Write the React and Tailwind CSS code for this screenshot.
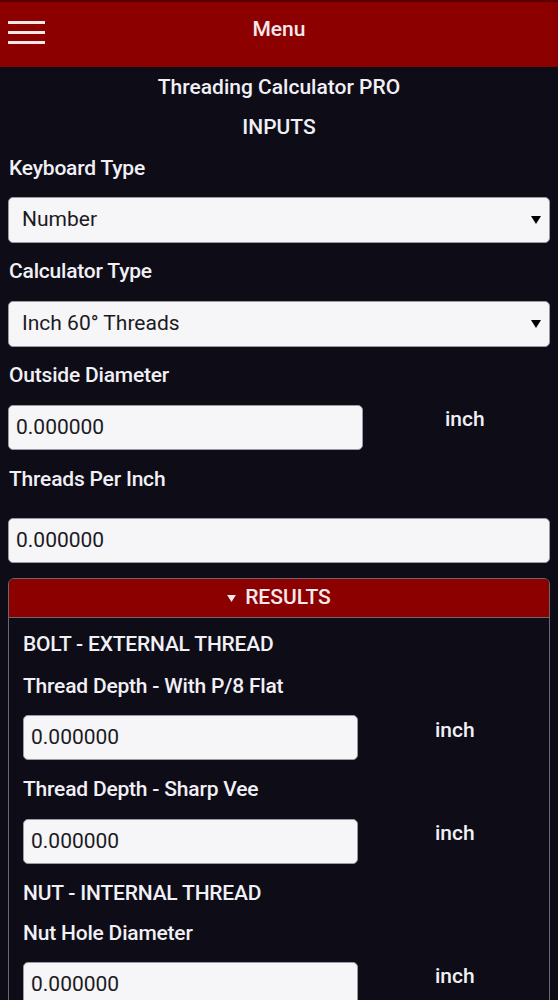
import { useState } from 'react';

// little solid triangle used by the selects and the collapsible header
const Caret = ({ className }) => (
  <svg viewBox="0 0 10 8" className={className} fill="currentColor">
    <path d="M0 0 L10 0 L5 8 Z" />
  </svg>
);

const Label = ({ children, className = '' }) => (
  <div className={`text-[21px] leading-[24px] font-medium tracking-[-0.2px] text-[#f1f0f6] ${className}`}>{children}</div>
);

const Select = ({ value, className = '' }) => (
  <div className={`h-[46px] flex items-center justify-between pl-[13px] pr-[8px] bg-[#f6f5f8] border border-[#9a9aa2] rounded-[5px] text-[21px] text-[#1b1b1f] ${className}`}>
    <span>{value}</span>
    <Caret className="w-[10px] h-[10px] text-black" />
  </div>
);

const NumberBox = ({ value, className = '' }) => (
  <div className={`h-[45px] flex items-center px-[7px] bg-[#f6f5f8] border border-[#9a9aa2] rounded-[5px] text-[21px] text-[#1b1b1f] ${className}`}>
    {value}
  </div>
);

const Unit = ({ className = '' }) => (
  <span className={`text-[21px] leading-[24px] font-medium text-[#f1f0f6] ${className}`}>inch</span>
);

const App = () => {
  const [open] = useState(true);

  return (
    <div className="min-h-screen w-[558px] bg-[#0e0c16] overflow-hidden" style={{ fontFamily: 'Roboto, "Liberation Sans", sans-serif' }}>
      {/* top bar */}
      <div className="relative h-[67px] bg-[#8d0000] border-t-[2px] border-[#5a0000] flex items-center justify-center">
        <div className="absolute left-[8px] top-[19px] flex flex-col gap-[7px]">
          <span className="block w-[37px] h-[3px] bg-[#f4e6e8]" />
          <span className="block w-[37px] h-[3px] bg-[#f4e6e8]" />
          <span className="block w-[37px] h-[3px] bg-[#f4e6e8]" />
        </div>
        <span className="text-[21px] font-medium text-[#f6e9ec] -mt-[10px]">Menu</span>
      </div>

      <div className="px-[8px]">
        <div className="h-[40px] mt-[1px] flex items-center justify-center text-[21px] font-medium text-[#f1f0f6]">Threading Calculator PRO</div>
        <div className="h-[40px] flex items-center justify-center text-[21px] font-medium text-[#f1f0f6]">INPUTS</div>

        <Label className="h-[39px] flex items-center pl-[1px]">Keyboard Type</Label>
        <Select value="Number" className="mt-[10px]" />

        <Label className="h-[40px] flex items-center pl-[1px] mt-[8px]">Calculator Type</Label>
        <Select value="Inch 60° Threads" className="mt-[10px]" />

        <Label className="h-[40px] flex items-center pl-[1px] mt-[8px]">Outside Diameter</Label>
        <div className="flex items-start mt-[10px]">
          <NumberBox value="0.000000" className="w-[355px]" />
          <Unit className="ml-[82px] mt-[2px]" />
        </div>

        <Label className="h-[40px] flex items-center pl-[1px] mt-[9px]">Threads Per Inch</Label>
        <NumberBox value="0.000000" className="mt-[19px]" />

        {/* results panel */}
        <div className="mt-[15px] border border-[#6b6870] rounded-t-[6px] overflow-hidden">
          <div className="h-[39px] bg-[#8d0000] border-b border-[#6b6870] flex items-center justify-center gap-[9px] text-[21px] font-medium text-[#f6e9ec]">
            <Caret className="w-[9px] h-[7px]" />
            <span>RESULTS</span>
          </div>

          {open && (
            <div className="px-[14px] pb-[20px]">
              <Label className="h-[40px] flex items-center mt-[6px]">BOLT - EXTERNAL THREAD</Label>
              <Label className="h-[40px] flex items-center mt-[2px]">Thread Depth - With P/8 Flat</Label>
              <div className="flex items-start mt-[9px]">
                <NumberBox value="0.000000" className="w-[335px]" />
                <Unit className="ml-[77px] mt-[3px]" />
              </div>

              <Label className="h-[40px] flex items-center mt-[9px]">Thread Depth - Sharp Vee</Label>
              <div className="flex items-start mt-[10px]">
                <NumberBox value="0.000000" className="w-[335px]" />
                <Unit className="ml-[77px] mt-[2px]" />
              </div>

              <Label className="h-[40px] flex items-center mt-[9px]">NUT - INTERNAL THREAD</Label>
              <Label className="h-[40px] flex items-center mt-[0px]">Nut Hole Diameter</Label>
              <div className="flex items-start mt-[9px]">
                <NumberBox value="0.000000" className="w-[335px]" />
                <Unit className="ml-[77px] mt-[2px]" />
              </div>
            </div>
          )}
        </div>
      </div>
    </div>
  );
};

export default App;
